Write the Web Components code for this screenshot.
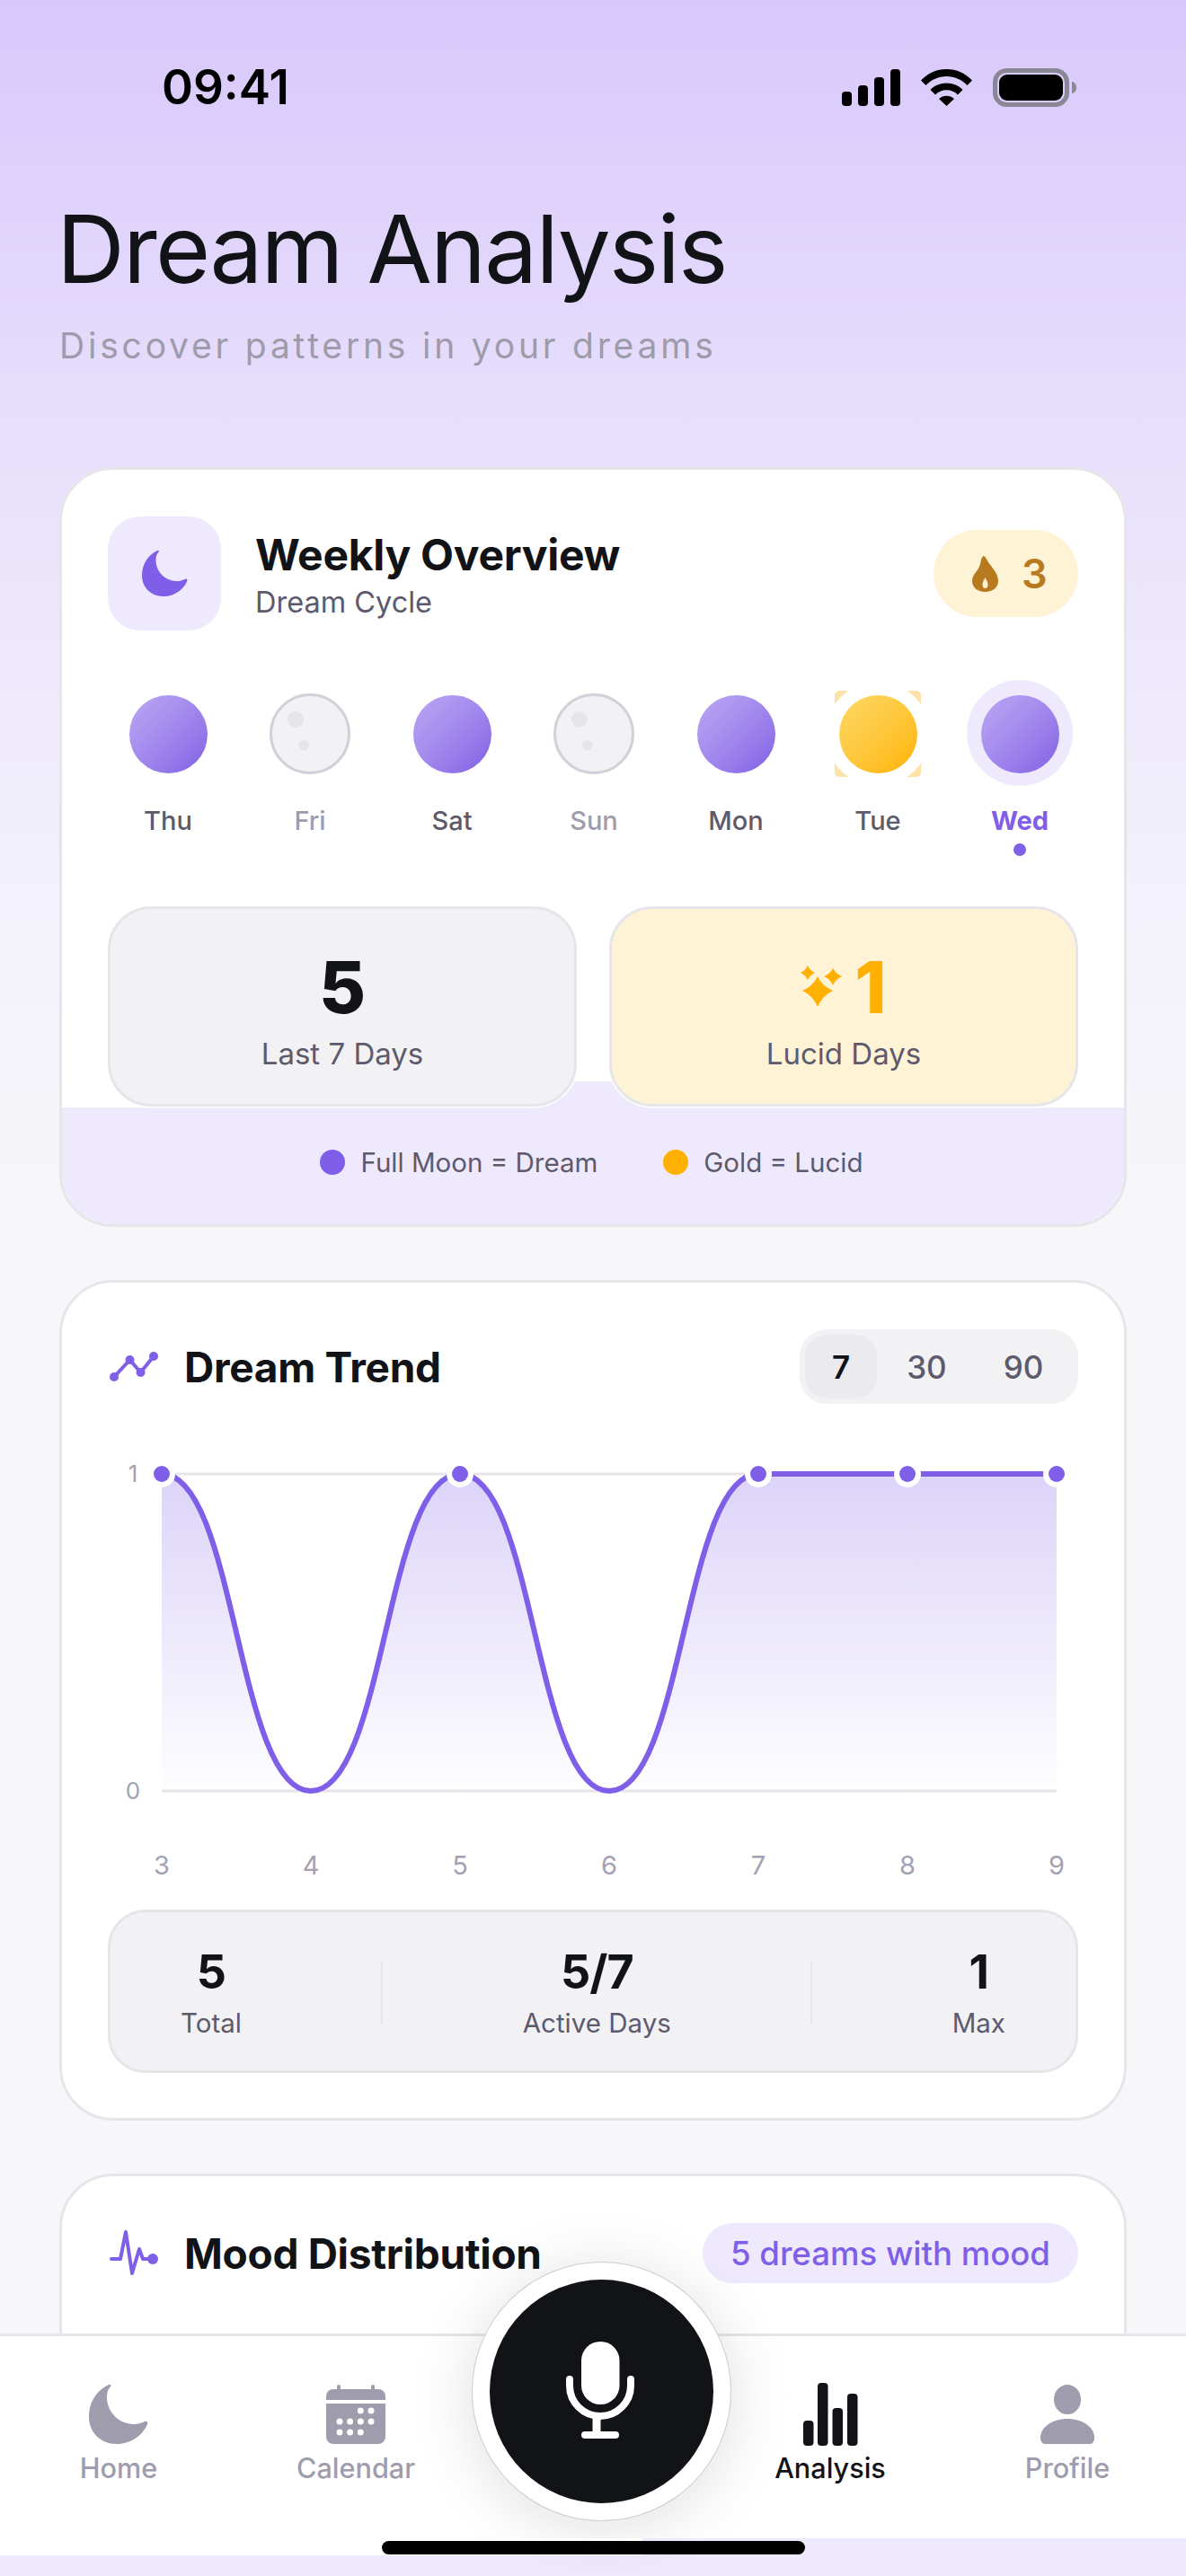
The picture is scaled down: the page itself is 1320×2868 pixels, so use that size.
<!DOCTYPE html>
<html lang="en">
<head>
<meta charset="utf-8">
<title>Dream Analysis</title>
<style>
  html, body{ margin: 0; padding: 0; }
  body{ font-family: Inter, "Liberation Sans", sans-serif; color: #121317; }
</style>
</head>
<body>
<dream-app>
  <status-bar slot="top"></status-bar>
  <page-heading slot="top" title="Dream Analysis" subtitle="Discover patterns in your dreams"></page-heading>

  <weekly-card>
    <moon-day label="Thu" kind="dream"></moon-day>
    <moon-day label="Fri" kind="empty"></moon-day>
    <moon-day label="Sat" kind="dream"></moon-day>
    <moon-day label="Sun" kind="empty"></moon-day>
    <moon-day label="Mon" kind="dream"></moon-day>
    <moon-day label="Tue" kind="lucid"></moon-day>
    <moon-day label="Wed" kind="dream" today></moon-day>
  </weekly-card>

  <trend-card></trend-card>
  <mood-card></mood-card>

  <bottom-nav slot="overlay"></bottom-nav>
</dream-app>

<script>
class DreamApp extends HTMLElement {
  constructor(){
    super();
    var shadowRoot = this.attachShadow({mode: 'open'});
    shadowRoot.innerHTML = `
      <style>
        :host{
          display: block;
          position: relative;
          width: 1320px;
          height: 2868px;
          overflow: hidden;
          background: linear-gradient(180deg, #d8c8fb 0, #e9e1fc 520px, #f3f1fb 1000px, #f7f7f9 1400px);
        }
        #content{
          display: flex;
          flex-direction: column;
          gap: 59px;
          padding: 0 66px;
        }
      </style>
      <slot name="top"></slot>
      <div id="content"><slot></slot></div>
      <slot name="overlay"></slot>
    `;
  }
}
customElements.define('dream-app', DreamApp);

class StatusBar extends HTMLElement {
  constructor(){
    super();
    var shadowRoot = this.attachShadow({mode: 'open'});
    shadowRoot.innerHTML = `
      <style>
        :host{
          display: flex;
          align-items: center;
          justify-content: space-between;
          height: 194px;
          padding: 0 122px 0 180px;
          box-sizing: border-box;
        }
        #time{ font-size: 53px; font-weight: 600; line-height: 60px; color: #000; }
        #icons{ display: flex; align-items: center; gap: 23px; }
        svg{ display: block; }
      </style>
      <div id="time">09:41</div>
      <div id="icons">
        <svg width="65" height="41" viewBox="0 0 65 41">
          <rect x="0" y="25" width="11" height="16" rx="4"/>
          <rect x="18" y="18" width="11" height="23" rx="4"/>
          <rect x="36" y="9" width="11" height="32" rx="4"/>
          <rect x="54" y="0" width="11" height="41" rx="4"/>
        </svg>
        <svg width="57" height="41" viewBox="0 0 57 41">
          <path d="M0 12.500C7.500 4.500 17.500 0 28.500 0S49.500 4.500 57 12.500L51.500 18C45.500 11.800 37.500 8 28.500 8S11.500 11.800 5.500 18Z"/>
          <path d="M10.500 23C15 18.300 21.300 15.500 28.500 15.500S42 18.300 46.500 23L41 28.500C37.800 25.300 33.500 23.300 28.500 23.300S19.200 25.300 16 28.500Z"/>
          <path d="M20 33C22.200 30.900 25.200 29.700 28.500 29.700S34.800 30.900 37 33L28.500 41Z"/>
        </svg>
        <svg width="93" height="43" viewBox="0 0 93 43">
          <rect x="2.500" y="2.500" width="80" height="38" rx="13" fill="none" stroke="#8a8795" stroke-width="5"/>
          <rect x="7" y="7" width="71" height="29" rx="9"/>
          <path d="M88 15C91 15.500 93 18 93 21.500S91 27.500 88 28Z" fill="#8a8795"/>
        </svg>
      </div>
    `;
  }
}
customElements.define('status-bar', StatusBar);

class PageHeading extends HTMLElement {
  constructor(){
    super();
    var shadowRoot = this.attachShadow({mode: 'open'});
    shadowRoot.innerHTML = `
      <style>
        :host{
          display: block;
          padding: 19px 66px 110px;
        }
        h1{
          margin: 0 0 0 -3px;
          font-size: 105px;
          font-weight: 400;
          line-height: 128px;
          letter-spacing: -1.8px;
          color: #121317;
        }
        p{
          margin: 19px 0 0;
          font-size: 39px;
          line-height: 50px;
          letter-spacing: 3.8px;
          color: #9e9bab;
        }
      </style>
      <h1></h1>
      <p></p>
    `;
    shadowRoot.querySelector('h1').textContent = this.getAttribute('title');
    shadowRoot.querySelector('p').textContent = this.getAttribute('subtitle');
  }
}
customElements.define('page-heading', PageHeading);

class MoonDay extends HTMLElement {
  constructor(){
    super();
    var shadowRoot = this.attachShadow({mode: 'open'});
    shadowRoot.innerHTML = `
      <style>
        :host{
          display: flex;
          flex-direction: column;
          align-items: center;
          width: 158px;
        }
        #slot{
          position: relative;
          display: flex;
          align-items: center;
          justify-content: center;
          width: 118px;
          height: 118px;
        }
        #moon{
          position: relative;
          width: 87px;
          height: 87px;
          border-radius: 50%;
          box-sizing: border-box;
          background: linear-gradient(135deg, #baa7f3 0%, #a890ef 38%, #9679e9 70%, #7f5fe8 100%);
        }
        :host([kind="lucid"]) #moon{
          background: linear-gradient(135deg, #ffd966 0%, #fdcb45 40%, #ffc02a 70%, #ffb000 100%);
        }
        :host([kind="empty"]) #moon{
          width: 90px;
          height: 90px;
          background: #f2f2f5;
          border: 3px solid #d1d1d9;
        }
        .crater{ position: absolute; border-radius: 50%; background: #e5e5ea; display: none; }
        :host([kind="empty"]) .crater{ display: block; }
        #c1{ left: 17px; top: 17px; width: 18px; height: 18px; }
        #c2{ left: 29px; top: 49px; width: 12px; height: 12px; }
        #halo{
          position: absolute;
          display: none;
          left: 0;
          top: -1px;
          width: 118px;
          height: 118px;
          border-radius: 50%;
          background: #efe9fd;
        }
        :host([today]) #halo{ display: block; }
        #corners{
          position: absolute;
          display: none;
          left: 11px;
          top: 11px;
          width: 96px;
          height: 96px;
          overflow: hidden;
          border-radius: 5px;
          background: #fde2a8;
        }
        #corners::after{
          content: "";
          position: absolute;
          left: -10px;
          top: -10px;
          width: 116px;
          height: 116px;
          border-radius: 50%;
          background: #fff;
        }
        :host([kind="lucid"]) #corners{ display: block; }
        #label{
          margin-top: 20px;
          font-size: 29px;
          font-weight: 500;
          line-height: 36px;
          color: #5c5a6c;
        }
        :host([kind="empty"]) #label{ color: #9e9cad; }
        :host([today]) #label{ color: #7f5fe8; font-weight: 700; }
        #dot{
          visibility: hidden;
          width: 14px;
          height: 14px;
          margin-top: 7px;
          border-radius: 50%;
          background: #7f5fe8;
        }
        :host([today]) #dot{ visibility: visible; }
      </style>
      <div id="slot">
        <div id="halo"></div>
        <div id="corners"></div>
        <div id="moon">
          <div class="crater" id="c1"></div>
          <div class="crater" id="c2"></div>
        </div>
      </div>
      <div id="label"></div>
      <div id="dot"></div>
    `;
    shadowRoot.querySelector('#label').textContent = this.getAttribute('label');
  }
}
customElements.define('moon-day', MoonDay);

class StatBox extends HTMLElement {
  constructor(){
    super();
    var shadowRoot = this.attachShadow({mode: 'open'});
    shadowRoot.innerHTML = `
      <style>
        :host{
          display: flex;
          flex-direction: column;
          align-items: center;
          position: relative;
          z-index: 1;
          padding: 45px 0 36px;
          border: 3px solid #e5e5ea;
          border-radius: 48px;
          background: #f2f2f5;
          box-shadow: 0 0 0 1.5px #fff;
        }
        :host([tone="gold"]){ background: #fff3d6; }
        #value{
          display: flex;
          align-items: center;
          gap: 12px;
          font-size: 80px;
          font-weight: 800;
          line-height: 84px;
          color: #121317;
        }
        :host([tone="gold"]) #value{ color: #ffb000; }
        #label{
          margin-top: 12px;
          font-size: 33px;
          line-height: 40px;
          color: #5c5a6c;
        }
      </style>
      <div id="value"><slot name="icon"></slot><span id="num"></span></div>
      <div id="label"></div>
    `;
    shadowRoot.querySelector('#num').textContent = this.getAttribute('value');
    shadowRoot.querySelector('#label').textContent = this.getAttribute('label');
  }
}
customElements.define('stat-box', StatBox);

class WeeklyCard extends HTMLElement {
  constructor(){
    super();
    var shadowRoot = this.attachShadow({mode: 'open'});
    shadowRoot.innerHTML = `
      <style>
        :host{
          display: block;
          border: 3px solid #e5e5ea;
          border-radius: 60px;
          background: #fff;
          overflow: hidden;
        }
        #body{ padding: 52px 51px 0; }
        #head{ display: flex; align-items: center; }
        #badge{
          display: flex;
          align-items: center;
          justify-content: center;
          width: 126px;
          height: 127px;
          border-radius: 36px;
          background: #efe9fd;
        }
        #titles{ margin-left: 38px; padding-top: 2px; flex: 1; }
        #title{ font-size: 48px; font-weight: 700; line-height: 58px; letter-spacing: -0.3px; }
        #sub{ margin-top: 4px; font-size: 32.5px; line-height: 40px; color: #5c5a6c; }
        #streak{
          display: flex;
          align-items: center;
          gap: 26px;
          width: 161px;
          height: 97px;
          box-sizing: border-box;
          padding-left: 43px;
          border-radius: 49px;
          background: #fff3d6;
          font-size: 45px;
          font-weight: 600;
          color: #b87a1e;
        }
        #days{
          display: flex;
          width: 1106px;
          margin: 56px 0 0 -12px;
        }
        #stats{
          display: grid;
          grid-template-columns: 1fr 1fr;
          gap: 36px;
          margin-top: 56px;
        }
        #band{
          position: relative;
          display: flex;
          align-items: center;
          justify-content: center;
          gap: 73px;
          height: 130px;
          box-sizing: border-box;
          margin-top: 1px;
          padding: 0 3px 8px 0;
          background: #efe9fd;
          font-size: 29.5px;
          line-height: 36px;
          color: #5c5a6c;
        }
        #band::before{
          content: "";
          position: absolute;
          left: 525px;
          top: -29px;
          width: 132px;
          height: 29px;
          background: #efe9fd;
        }
        .key{ display: flex; align-items: center; gap: 17px; }
        .key i{ display: block; width: 28px; height: 28px; border-radius: 50%; }
        svg{ display: block; }
      </style>
      <div id="body">
        <div id="head">
          <div id="badge">
            <svg width="51" height="51" viewBox="0 0 66 66"><path fill="#7f5fe8" d="M22 0C6 8 0 22 0 36C0 53 13 66 31 66C47 66 60 56 65 44C66 41 64 40 62 41C58 43 54 44 50 44C33 44 20 30 20 14C20 9 21 5 24 2C25 0 24 -1 22 0Z"/></svg>
          </div>
          <div id="titles">
            <div id="title">Weekly Overview</div>
            <div id="sub">Dream Cycle</div>
          </div>
          <div id="streak">
            <svg width="29" height="40" viewBox="0 0 29 40"><path fill="#b87a1e" fill-rule="evenodd" d="M13 0C15 1 16 4 18 7C22 13 29 19 29 28C29 35 23 40 14.500 40C6 40 0 35 0 28C0 20 7 17 9 9C10 5 10 1 13 0ZM14.500 24C12.800 27 11.500 29.500 11.500 32C11.500 34.500 12.800 36 14.500 36C16.200 36 17.500 34.500 17.500 32C17.500 29.500 16.200 27 14.500 24Z"/></svg>
            <span>3</span>
          </div>
        </div>
        <div id="days"><slot></slot></div>
        <div id="stats">
          <stat-box value="5" label="Last 7 Days"></stat-box>
          <stat-box value="1" label="Lucid Days" tone="gold">
            <svg slot="icon" id="sparkle" width="48" height="48" viewBox="0 0 48 48"></svg>
          </stat-box>
        </div>
      </div>
      <div id="band">
        <div class="key"><i style="background:#7f5fe8"></i>Full Moon = Dream</div>
        <div class="key"><i style="background:#ffb000"></i>Gold = Lucid</div>
      </div>
    `;
    // sparkle is three four-point stars
    var star = function(cx, cy, w, up, down){
      var k = 0.3;
      return 'M' + cx + ' ' + (cy - up) +
        'Q' + (cx + w * k) + ' ' + (cy - up * k) + ' ' + (cx + w) + ' ' + cy +
        'Q' + (cx + w * k) + ' ' + (cy + down * k) + ' ' + cx + ' ' + (cy + down) +
        'Q' + (cx - w * k) + ' ' + (cy + down * k) + ' ' + (cx - w) + ' ' + cy +
        'Q' + (cx - w * k) + ' ' + (cy - up * k) + ' ' + cx + ' ' + (cy - up) + 'Z';
    };
    shadowRoot.querySelector('#sparkle').innerHTML =
      '<path fill="#ffb000" d="' + star(19, 28, 17, 16, 18) + star(8, 8, 8, 8, 8) + star(36, 12, 10, 9, 10) + '"/>';
  }
}
customElements.define('weekly-card', WeeklyCard);

class CardHeader extends HTMLElement {
  constructor(){
    super();
    var shadowRoot = this.attachShadow({mode: 'open'});
    shadowRoot.innerHTML = `
      <style>
        :host{ display: flex; align-items: center; }
        #icon{ width: 60px; height: 60px; margin-right: 25px; }
        #title{ flex: 1; font-size: 46px; font-weight: 700; line-height: 56px; letter-spacing: -0.3px; color: #121317; }
      </style>
      <div id="icon"><slot name="icon"></slot></div>
      <div id="title"></div>
      <slot></slot>
    `;
    shadowRoot.querySelector('#title').textContent = this.getAttribute('title');
  }
}
customElements.define('card-header', CardHeader);

class RangePicker extends HTMLElement {
  constructor(){
    super();
    var shadowRoot = this.attachShadow({mode: 'open'});
    shadowRoot.innerHTML = `
      <style>
        :host{
          display: flex;
          gap: 3px;
          height: 83px;
          width: 310px;
          box-sizing: border-box;
          padding: 6px;
          border-radius: 30px;
          background: #f2f2f5;
          font-size: 35px;
          font-weight: 500;
          color: #5c5a6c;
        }
        span{
          display: flex;
          align-items: center;
          padding: 0 30px;
          border-radius: 24px;
        }
        .on{ background: #ebebef; color: #121317; font-weight: 600; }
      </style>
      <span class="on">7</span><span>30</span><span>90</span>
    `;
  }
}
customElements.define('range-picker', RangePicker);

class TrendChart extends HTMLElement {
  constructor(){
    super();
    var shadowRoot = this.attachShadow({mode: 'open'});
    var data = [1, 0, 1, 0, 1, 1, 1];
    var days = [3, 4, 5, 6, 7, 8, 9];
    var x0 = 60, step = 166, yTop = 78, yBottom = 431;
    var px = function(i){ return x0 + step * i; };
    var py = function(v){ return v ? yTop : yBottom; };

    var line = 'M' + px(0) + ' ' + py(data[0]);
    for(let i = 1; i < data.length; i++){
      var mid = px(i - 1) + step / 2;
      line += 'C' + mid + ' ' + py(data[i - 1]) + ' ' + mid + ' ' + py(data[i]) + ' ' + px(i) + ' ' + py(data[i]);
    }
    var area = line + 'L' + px(6) + ' ' + yBottom + 'L' + px(0) + ' ' + yBottom + 'Z';

    var dots = '', labels = '';
    data.forEach(function(v, i){
      if(v) dots += '<circle cx="' + px(i) + '" cy="' + yTop + '" r="15" fill="#fff"/><circle cx="' + px(i) + '" cy="' + yTop + '" r="9" fill="#7f5fe8"/>';
      labels += '<text x="' + px(i) + '" y="524" text-anchor="middle" font-size="29">' + days[i] + '</text>';
    });

    shadowRoot.innerHTML = `
      <style>
        :host{ display: block; height: 537px; }
        svg{ display: block; }
        text{ font-family: Inter, "Liberation Sans", sans-serif; fill: #a3a1b2; }
      </style>
      <svg width="1080" height="537" viewBox="0 0 1080 537">
        <defs>
          <linearGradient id="fill" gradientUnits="userSpaceOnUse" x1="0" y1="${yTop}" x2="0" y2="${yBottom}">
            <stop offset="0" stop-color="#7f5fe8" stop-opacity="0.27"/>
            <stop offset="1" stop-color="#7f5fe8" stop-opacity="0.01"/>
          </linearGradient>
        </defs>
        <line x1="${px(0)}" x2="${px(6)}" y1="${yTop}" y2="${yTop}" stroke="#e5e5ea" stroke-width="3"/>
        <line x1="${px(0)}" x2="${px(6)}" y1="${yBottom}" y2="${yBottom}" stroke="#e5e5ea" stroke-width="3"/>
        <path d="${area}" fill="url(#fill)"/>
        <path d="${line}" fill="none" stroke="#7f5fe8" stroke-width="6"/>
        ${dots}
        <text x="28" y="87" text-anchor="middle" font-size="26">1</text>
        <text x="28" y="440" text-anchor="middle" font-size="26">0</text>
        ${labels}
      </svg>
    `;
  }
}
customElements.define('trend-chart', TrendChart);

class TrendCard extends HTMLElement {
  constructor(){
    super();
    var shadowRoot = this.attachShadow({mode: 'open'});
    shadowRoot.innerHTML = `
      <style>
        :host{
          display: block;
          padding: 52px 51px 50px;
          border: 3px solid #e5e5ea;
          border-radius: 60px;
          background: #fff;
        }
        #totals{
          display: flex;
          align-items: center;
          justify-content: space-between;
          margin-top: 26px;
          padding: 37px 78px 34px;
          border: 3px solid #e5e5ea;
          border-radius: 42px;
          background: #f2f2f5;
        }
        .item{ display: flex; flex-direction: column; align-items: center; }
        .num{ font-size: 52px; font-weight: 700; line-height: 60px; letter-spacing: -1px; color: #121317; }
        .cap{ margin-top: 7px; font-size: 29.5px; line-height: 38px; color: #5c5a6c; }
        .sep{ width: 2px; height: 71px; background: #e5e5ea; }
      </style>
      <card-header title="Dream Trend">
        <svg slot="icon" width="60" height="60" viewBox="0 0 60 60" fill="#7f5fe8">
          <path d="M7 41L24.500 22L36.500 36L51 18" fill="none" stroke="#7f5fe8" stroke-width="4" stroke-linecap="round" stroke-linejoin="round"/>
          <circle cx="7" cy="41" r="5"/><circle cx="24.500" cy="22" r="5"/><circle cx="36.500" cy="36" r="5"/><circle cx="51" cy="18" r="5"/>
        </svg>
        <range-picker></range-picker>
      </card-header>
      <trend-chart></trend-chart>
      <div id="totals">
        <div class="item"><div class="num">5</div><div class="cap">Total</div></div>
        <div class="sep"></div>
        <div class="item"><div class="num">5/7</div><div class="cap">Active Days</div></div>
        <div class="sep"></div>
        <div class="item"><div class="num">1</div><div class="cap">Max</div></div>
      </div>
    `;
  }
}
customElements.define('trend-card', TrendCard);

class MoodCard extends HTMLElement {
  constructor(){
    super();
    var shadowRoot = this.attachShadow({mode: 'open'});
    shadowRoot.innerHTML = `
      <style>
        :host{
          display: block;
          height: 400px;
          padding: 52px 51px 0;
          border: 3px solid #e5e5ea;
          border-radius: 60px;
          background: #fff;
        }
        #pill{
          display: flex;
          align-items: center;
          height: 67px;
          padding: 0 31px;
          border-radius: 34px;
          background: #efe9fd;
          font-size: 36.6px;
          font-weight: 500;
          color: #7f5fe8;
        }
      </style>
      <card-header title="Mood Distribution">
        <svg slot="icon" width="60" height="60" viewBox="0 0 60 60">
          <path d="M4 36H14L20 6L27 52L35 25L39 36H50" fill="none" stroke="#7f5fe8" stroke-width="4" stroke-linecap="round" stroke-linejoin="round"/>
          <circle cx="50" cy="36" r="6" fill="#7f5fe8"/>
        </svg>
        <div id="pill">5 dreams with mood</div>
      </card-header>
    `;
  }
}
customElements.define('mood-card', MoodCard);

class NavItem extends HTMLElement {
  constructor(){
    super();
    var shadowRoot = this.attachShadow({mode: 'open'});
    shadowRoot.innerHTML = `
      <style>
        :host{
          display: flex;
          flex-direction: column;
          align-items: center;
          color: #9e9cad;
        }
        :host([active]){ color: #121317; }
        #icon{ display: flex; align-items: flex-start; justify-content: center; height: 68px; }
        #label{ margin-top: 7px; font-size: 30.6px; font-weight: 500; line-height: 36px; }
      </style>
      <div id="icon"><slot></slot></div>
      <div id="label"></div>
    `;
    shadowRoot.querySelector('#label').textContent = this.getAttribute('label');
  }
}
customElements.define('nav-item', NavItem);

class BottomNav extends HTMLElement {
  constructor(){
    super();
    var shadowRoot = this.attachShadow({mode: 'open'});
    shadowRoot.innerHTML = `
      <style>
        :host{
          position: absolute;
          left: 0;
          right: 0;
          top: 2598px;
          height: 270px;
          display: block;
          background: #efe9fd;
        }
        #bar{
          display: grid;
          grid-template-columns: repeat(5, 264px);
          height: 247px;
          box-sizing: border-box;
          padding-top: 54px;
          border-top: 3px solid #e5e5ea;
          background: #fff;
        }
        #mic{
          position: absolute;
          left: 525px;
          top: -80px;
          width: 289px;
          height: 289px;
          box-sizing: border-box;
          display: flex;
          align-items: center;
          justify-content: center;
          border: 1px solid rgba(110, 110, 130, 0.35);
          border-radius: 50%;
          background: #fff;
          box-shadow: 0 8px 70px rgba(18, 19, 23, 0.13);
        }
        #mic-inner{
          width: 249px;
          height: 249px;
          border-radius: 50%;
          background: #121317;
          display: flex;
          align-items: center;
          justify-content: center;
        }
        #foot{
          position: absolute;
          left: 0;
          right: 0;
          top: 228px;
          height: 19px;
          background: linear-gradient(90deg, #fff 715px, #efe9fd 715px);
        }
        #indicator{
          position: absolute;
          left: 425px;
          top: 231px;
          width: 471px;
          height: 15px;
          border-radius: 8px;
          background: #000;
        }
        svg{ display: block; }
      </style>
      <div id="bar">
        <nav-item label="Home">
          <svg width="66" height="66" viewBox="0 0 66 66"><path fill="#9e9cad" d="M22 0C6 8 0 22 0 36C0 53 13 66 31 66C47 66 60 56 65 44C66 41 64 40 62 41C58 43 54 44 50 44C33 44 20 30 20 14C20 9 21 5 24 2C25 0 24 -1 22 0Z"/></svg>
        </nav-item>
        <nav-item label="Calendar">
          <svg width="66" height="66" viewBox="0 0 66 66" fill="#9e9cad">
            <rect x="12" y="0" width="4" height="8" rx="2"/>
            <rect x="50" y="0" width="4" height="8" rx="2"/>
            <path d="M8 5H58A8 8 0 0 1 66 13V17H0V13A8 8 0 0 1 8 5Z"/>
            <path d="M0 21H66V58A8 8 0 0 1 58 66H8A8 8 0 0 1 0 58Z"/>
            <g fill="#fff">
              <circle cx="38.300" cy="29" r="3.500"/><circle cx="50" cy="29" r="3.500"/>
              <circle cx="15" cy="41" r="3.500"/><circle cx="26.600" cy="41" r="3.500"/><circle cx="38.300" cy="41" r="3.500"/><circle cx="50" cy="41" r="3.500"/>
              <circle cx="15" cy="53" r="3.500"/><circle cx="26.600" cy="53" r="3.500"/><circle cx="38.300" cy="53" r="3.500"/>
            </g>
          </svg>
        </nav-item>
        <div></div>
        <nav-item label="Analysis" active>
          <svg width="62" height="70" viewBox="0 0 62 70" fill="#121317" style="margin-top:-2px">
            <rect x="1" y="42" width="11.500" height="28" rx="4"/>
            <rect x="17" y="0" width="11.500" height="70" rx="4"/>
            <rect x="33.500" y="28" width="11.500" height="42" rx="4"/>
            <rect x="50" y="12" width="11.500" height="58" rx="4"/>
          </svg>
        </nav-item>
        <nav-item label="Profile">
          <svg width="62" height="66" viewBox="0 0 62 66" fill="#9e9cad">
            <ellipse cx="31" cy="16.500" rx="15" ry="16.500"/>
            <path d="M1 59C1 48 13 38 31 38S61 48 61 59C61 63 59 66 56 66H6C3 66 1 63 1 59Z"/>
          </svg>
        </nav-item>
      </div>
      <div id="mic">
        <div id="mic-inner">
          <svg width="84" height="112" viewBox="0 0 84 112" style="margin-left:-3px">
            <rect x="21" y="0" width="42.500" height="70" rx="21" fill="#fff"/>
            <path d="M8 42V49A34 34 0 0 0 76 49V42" fill="none" stroke="#fff" stroke-width="8" stroke-linecap="round"/>
            <path d="M38 83V104" fill="none" stroke="#fff" stroke-width="9"/>
            <path d="M25 104H59" fill="none" stroke="#fff" stroke-width="8" stroke-linecap="round"/>
          </svg>
        </div>
      </div>
      <div id="foot"></div>
      <div id="indicator"></div>
    `;
  }
}
customElements.define('bottom-nav', BottomNav);
</script>
</body>
</html>
